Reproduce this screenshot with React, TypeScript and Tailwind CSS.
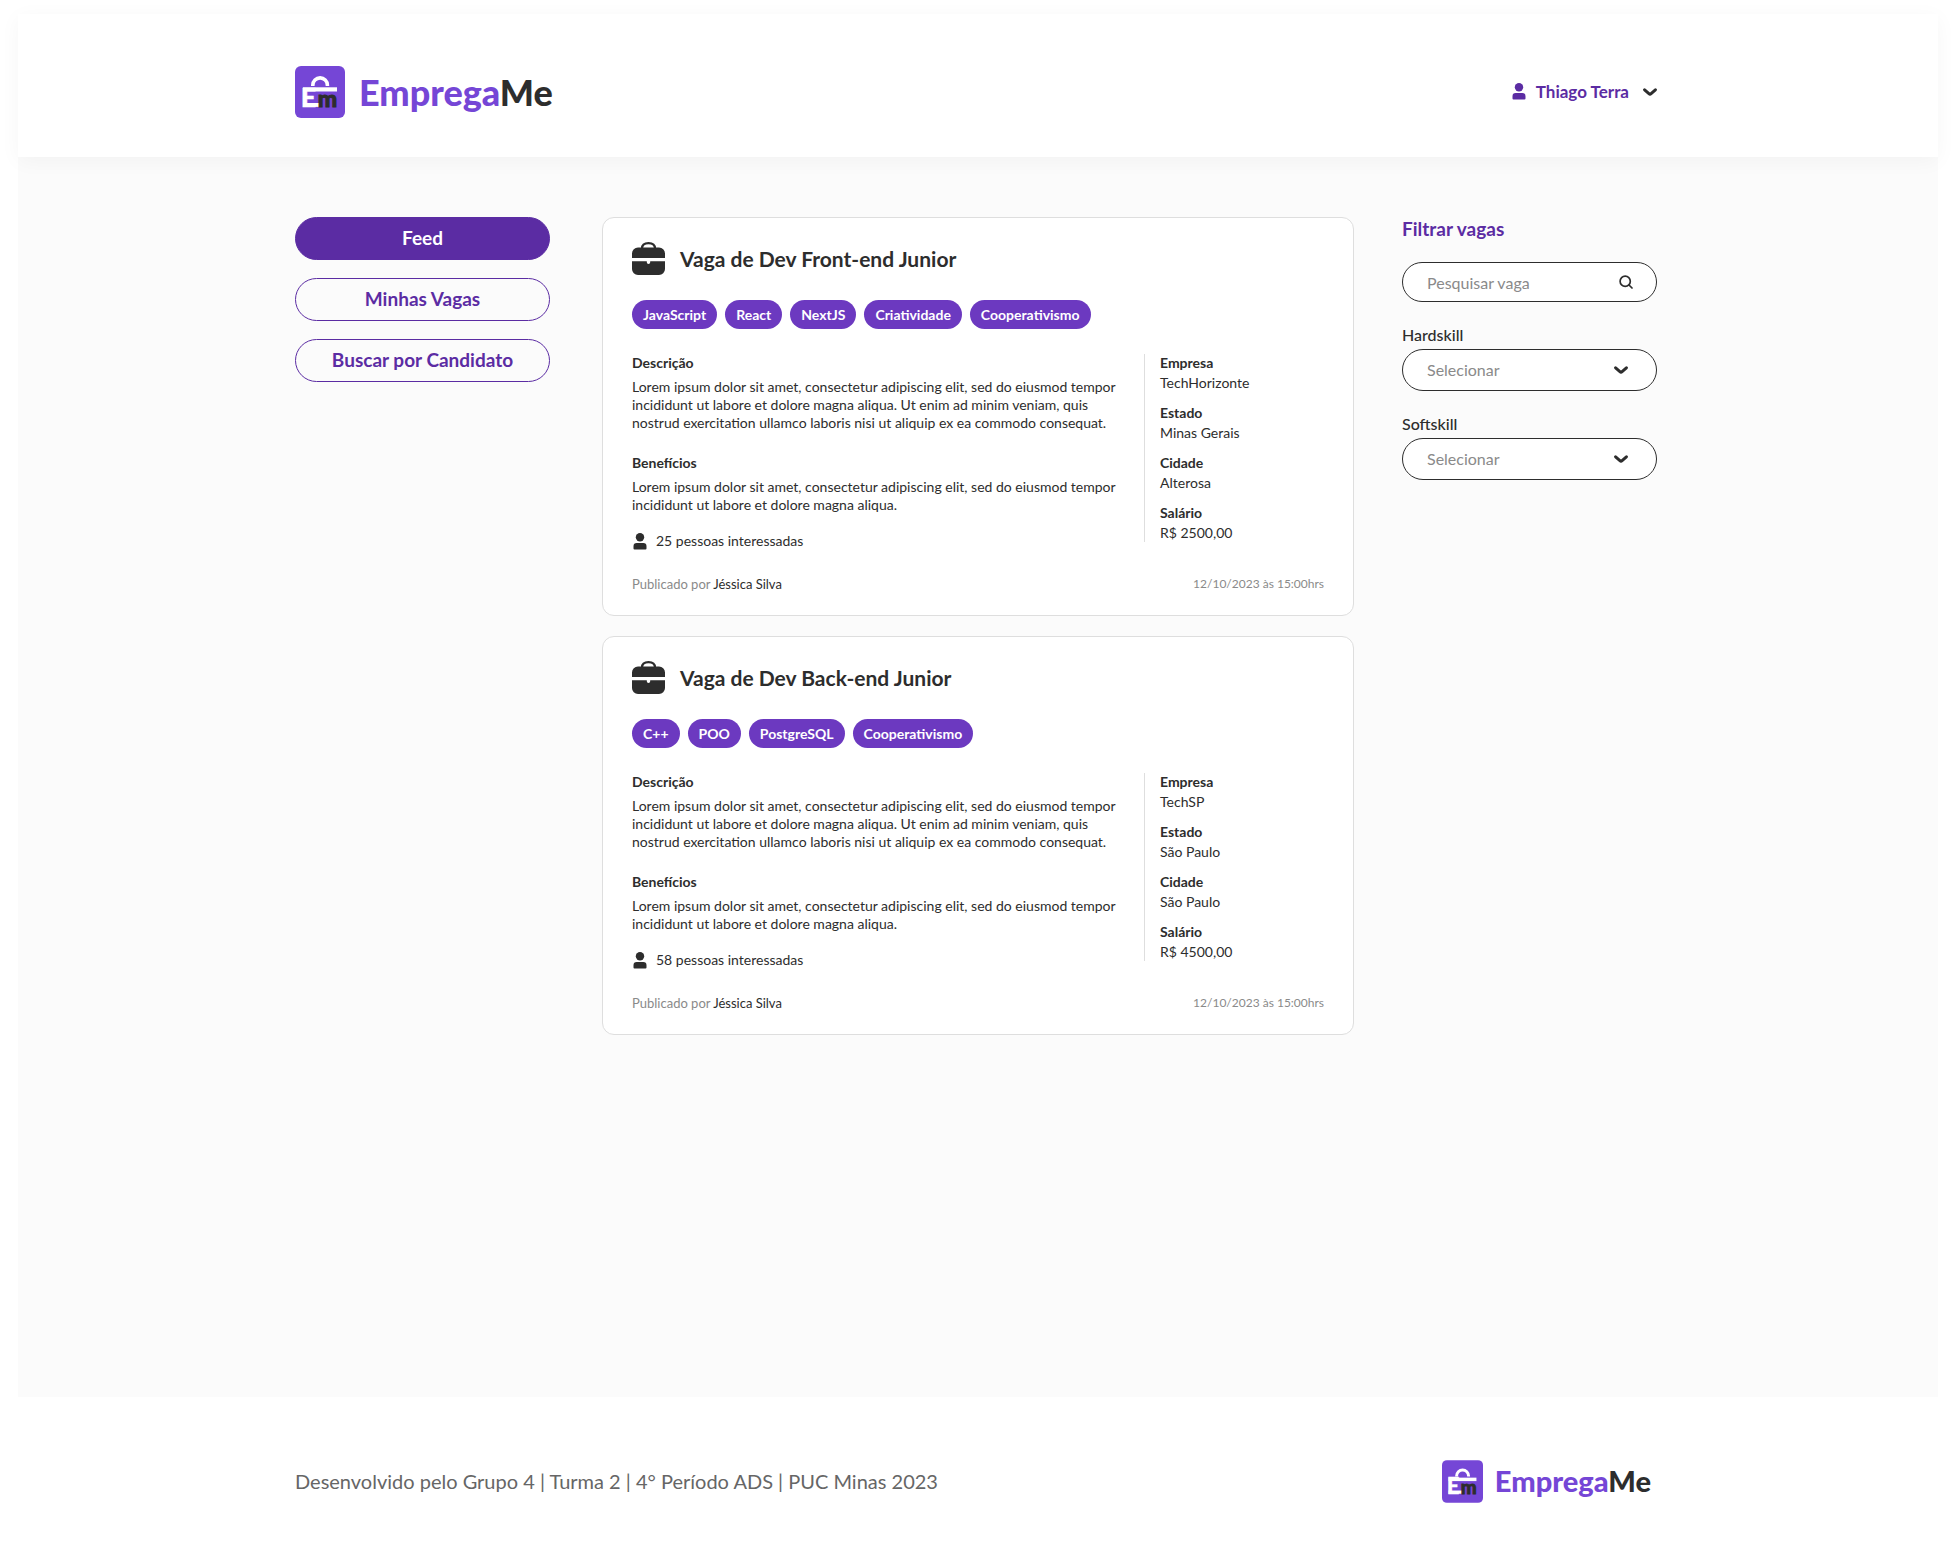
import React from "react";

type Job = {
  title: string;
  skills: string[];
  description: string;
  benefits: string;
  interested: number;
  details: { label: string; value: string }[];
  author: string;
  publishedAt: string;
};

const DESCRIPTION =
  "Lorem ipsum dolor sit amet, consectetur adipiscing elit, sed do eiusmod tempor incididunt ut labore et dolore magna aliqua. Ut enim ad minim veniam, quis nostrud exercitation ullamco laboris nisi ut aliquip ex ea commodo consequat.";
const BENEFITS =
  "Lorem ipsum dolor sit amet, consectetur adipiscing elit, sed do eiusmod tempor incididunt ut labore et dolore magna aliqua.";

const jobs: Job[] = [
  {
    title: "Vaga de Dev Front-end Junior",
    skills: ["JavaScript", "React", "NextJS", "Criatividade", "Cooperativismo"],
    description: DESCRIPTION,
    benefits: BENEFITS,
    interested: 25,
    details: [
      { label: "Empresa", value: "TechHorizonte" },
      { label: "Estado", value: "Minas Gerais" },
      { label: "Cidade", value: "Alterosa" },
      { label: "Salário", value: "R$ 2500,00" },
    ],
    author: "Jéssica Silva",
    publishedAt: "12/10/2023 às 15:00hrs",
  },
  {
    title: "Vaga de Dev Back-end Junior",
    skills: ["C++", "POO", "PostgreSQL", "Cooperativismo"],
    description: DESCRIPTION,
    benefits: BENEFITS,
    interested: 58,
    details: [
      { label: "Empresa", value: "TechSP" },
      { label: "Estado", value: "São Paulo" },
      { label: "Cidade", value: "São Paulo" },
      { label: "Salário", value: "R$ 4500,00" },
    ],
    author: "Jéssica Silva",
    publishedAt: "12/10/2023 às 15:00hrs",
  },
];

function LogoMark({ className }: { className: string }) {
  return (
    <svg viewBox="0 0 50 52" className={className} aria-hidden="true">
      <rect width="50" height="52" rx="6" fill="#7546d6" />
      {/* suitcase handle, lid and base */}
      <path d="M17.800 20v-.8a7.300 7.300 0 0 1 14.600 0v.8" fill="none" stroke="#fff" strokeWidth="3.600" />
      <rect x="8" y="21.300" width="34" height="4.200" fill="#fff" />
      <rect x="8" y="37" width="17" height="3.900" fill="#fff" />
      <text x="5.800" y="40.900" fontFamily="Lato" fontWeight="900" fontSize="27" fill="#fff" stroke="#fff" strokeWidth=".4">
        E
      </text>
      <text x="22.800" y="40.700" fontFamily="Lato" fontWeight="900" fontSize="23" fill="#2d2d2d" stroke="#2d2d2d" strokeWidth="1">
        m
      </text>
    </svg>
  );
}

function PersonIcon({ className }: { className: string }) {
  return (
    <svg viewBox="0 0 14 17" className={className} fill="currentColor" aria-hidden="true">
      <circle cx="7" cy="4.200" r="4.200" />
      <path d="M.5 13.200A3.200 3.200 0 0 1 3.700 10h6.600a3.200 3.200 0 0 1 3.200 3.200v2.400a1 1 0 0 1-1 1h-11a1 1 0 0 1-1-1Z" />
    </svg>
  );
}

function ChevronIcon({ className }: { className: string }) {
  return (
    <svg viewBox="0 0 14 8" className={className} aria-hidden="true">
      <path d="M1.600 1.800 5.900 5.700q1.100.9 2.200 0L12.400 1.800" fill="none" stroke="#2d2d2d" strokeWidth="3" strokeLinecap="round" />
    </svg>
  );
}

function BriefcaseIcon() {
  return (
    <svg viewBox="0 0 33 33" className="size-[33px] shrink-0" aria-hidden="true">
      <path d="M10 6.500C10 3 12.500 1.100 16.500 1.100S23 3 23 6.500" fill="none" stroke="#2d2d2d" strokeWidth="2.200" />
      <path d="M0 16v-4.500A6 6 0 0 1 6 5.500h21a6 6 0 0 1 6 6V16Z" fill="#2d2d2d" />
      <path d="M0 19.300h14.800v1a1.700 1.700 0 0 0 3.400 0v-1H33V27a6 6 0 0 1-6 6H6a6 6 0 0 1-6-6Z" fill="#2d2d2d" />
    </svg>
  );
}

function NavButton({ children, active = false }: { children: React.ReactNode; active?: boolean }) {
  return (
    <button
      type="button"
      className={
        active
          ? "h-[43px] rounded-full border border-[#5b2ca3] bg-[#5b2ca3] text-[19px] font-bold text-white"
          : "h-[43px] rounded-full border border-[#5b2ca3] text-[19px] font-bold text-[#5b2ca3]"
      }
    >
      {children}
    </button>
  );
}

function JobCard({ job }: { job: Job }) {
  return (
    <article className="rounded-xl border border-[#dedede] bg-white px-[29px] pt-6 pb-[22px] text-sm leading-[18px]">
      <header className="flex items-center gap-[15px]">
        <BriefcaseIcon />
        <h2 className="text-[21px] leading-6 font-bold">{job.title}</h2>
      </header>
      <ul className="mt-[25px] flex flex-wrap gap-2">
        {job.skills.map((skill) => (
          <li key={skill} className="flex h-[29px] items-center rounded-full bg-[#6c39c0] px-[11px] font-bold text-white">
            {skill}
          </li>
        ))}
      </ul>
      <div className="mt-[25px] flex">
        <div className="min-w-0 flex-1 pr-[22px]">
          <h3 className="font-bold">Descrição</h3>
          <p className="mt-1.5">{job.description}</p>
          <h3 className="mt-[22px] font-bold">Benefícios</h3>
          <p className="mt-1.5">{job.benefits}</p>
          <p className="mt-[18px] flex items-center gap-[9px]">
            <PersonIcon className="ml-px h-[17px] w-3.5" />
            {job.interested} pessoas interessadas
          </p>
        </div>
        <dl className="flex w-[180px] flex-col gap-3 self-start border-l border-[#dedede] pl-[15px]">
          {job.details.map(({ label, value }) => (
            <div key={label} className="flex flex-col gap-0.5">
              <dt className="font-bold">{label}</dt>
              <dd>{value}</dd>
            </div>
          ))}
        </dl>
      </div>
      <footer className="mt-[25px] flex justify-between text-[#8a8a8a]">
        <p className="text-[13px]">
          Publicado por <span className="text-[#2d2d2d]">{job.author}</span>
        </p>
        <time className="text-xs leading-[18px]">{job.publishedAt}</time>
      </footer>
    </article>
  );
}

function SkillSelect({ id, label }: { id: string; label: string }) {
  return (
    <div className="flex flex-col gap-1">
      <label htmlFor={id} className="text-base leading-5 font-medium">
        {label}
      </label>
      <div className="relative">
        <select
          id={id}
          className="h-[42px] w-full appearance-none rounded-full border border-[#2d2d2d] bg-white px-6 text-base text-[#8a8a8a]"
        >
          <option>Selecionar</option>
        </select>
        <ChevronIcon className="pointer-events-none absolute top-[17px] right-[29px] h-2 w-3.5" />
      </div>
    </div>
  );
}

export default function App() {
  return (
    <div className="flex min-h-screen flex-col bg-white px-[18px] pt-3.5 font-['Lato',sans-serif] text-[#2d2d2d]">
      <header className="relative z-10 bg-white shadow-[0_4px_20px_rgba(0,0,0,0.04)]">
        <div className="mx-auto flex h-[143px] max-w-[1366px] items-center justify-between pt-3 pr-1">
          <a href="#" className="flex items-center gap-3.5">
            <LogoMark className="h-[52px] w-[50px]" />
            <span className="text-4xl font-black text-[#7546d6]">
              Emprega<span className="text-[#2d2d2d]">Me</span>
            </span>
          </a>
          <button type="button" className="flex items-center text-[17px] font-bold text-[#5b2ca3]">
            <PersonIcon className="mr-2.5 h-[17px] w-3.5" />
            Thiago Terra
            <ChevronIcon className="ml-3.5 h-2 w-3.5" />
          </button>
        </div>
      </header>

      <main className="flex-1 bg-[#fbfbfb] pt-[60px] pb-[60px]">
        <div className="mx-auto flex max-w-[1366px] items-start pr-1">
          <nav className="flex w-[255px] shrink-0 flex-col gap-[18px]">
            <NavButton active>Feed</NavButton>
            <NavButton>Minhas Vagas</NavButton>
            <NavButton>Buscar por Candidato</NavButton>
          </nav>

          <section className="mr-12 ml-[52px] flex min-w-0 flex-1 flex-col gap-5">
            {jobs.map((job) => (
              <JobCard key={job.title} job={job} />
            ))}
          </section>

          <aside className="flex w-[255px] shrink-0 flex-col">
            <h2 className="text-[19px] leading-6 font-bold text-[#5b2ca3]">Filtrar vagas</h2>
            <div className="relative mt-[21px]">
              <input
                type="search"
                aria-label="Pesquisar vaga"
                placeholder="Pesquisar vaga"
                className="h-10 w-full rounded-full border border-[#2d2d2d] bg-white pr-12 pl-6 text-base placeholder:text-[#8a8a8a]"
              />
              <svg viewBox="0 0 14 14" className="pointer-events-none absolute top-[13px] right-6 size-3.5" fill="none" stroke="#2d2d2d" strokeWidth="1.700" strokeLinecap="round" aria-hidden="true">
                <circle cx="6.200" cy="6.200" r="5.100" />
                <path d="m10 10 3 3" />
              </svg>
            </div>
            <div className="mt-[23px] flex flex-col gap-[23px]">
              <SkillSelect id="hardskill" label="Hardskill" />
              <SkillSelect id="softskill" label="Softskill" />
            </div>
          </aside>
        </div>
      </main>

      <footer>
        <div className="mx-auto flex h-[168px] max-w-[1366px] items-center justify-between pr-1">
          <p className="text-xl text-[#666666]">
            Desenvolvido pelo Grupo 4 | Turma 2 | 4° Período ADS | PUC Minas 2023
          </p>
          <a href="#" className="flex items-center gap-3 pr-1.5">
            <LogoMark className="h-[43px] w-[41px]" />
            <span className="text-[29px] font-black text-[#7546d6]">
              Emprega<span className="text-[#2d2d2d]">Me</span>
            </span>
          </a>
        </div>
      </footer>
    </div>
  );
}
